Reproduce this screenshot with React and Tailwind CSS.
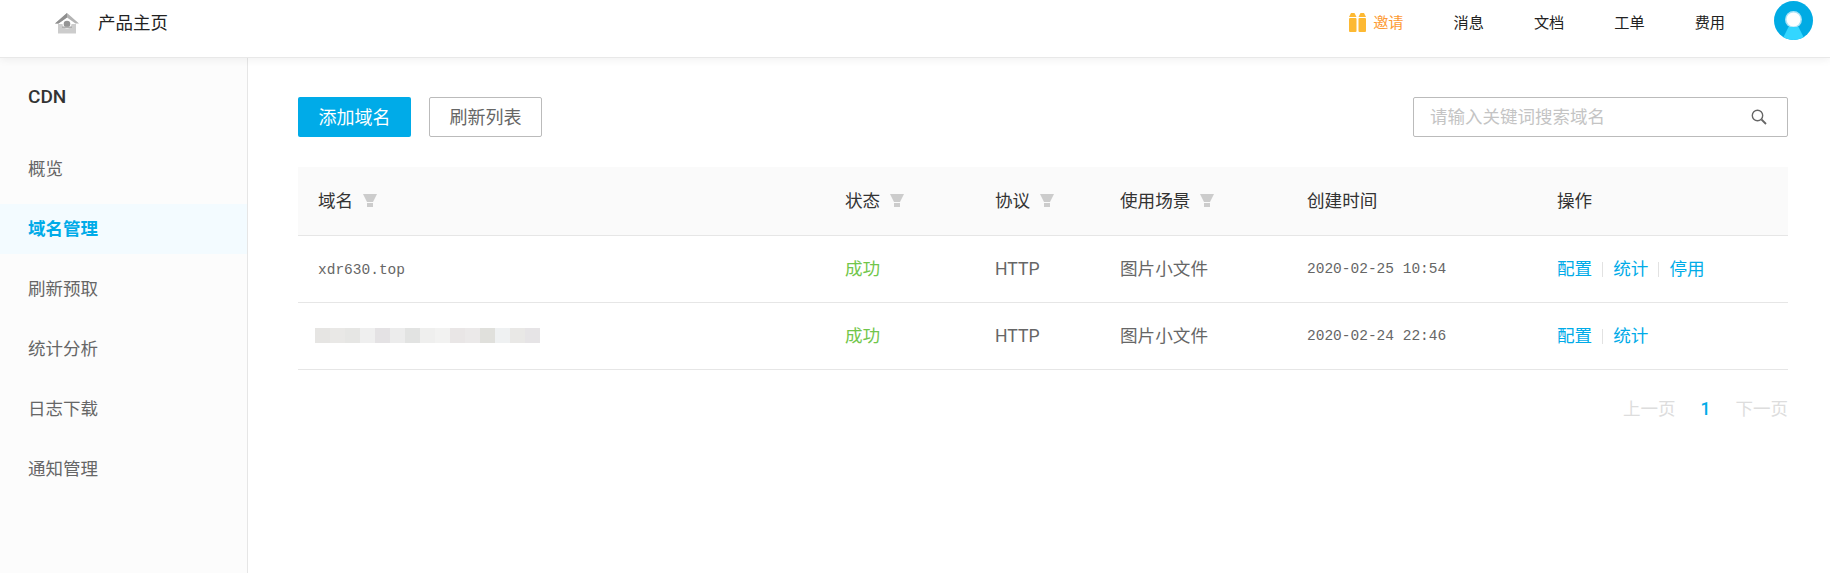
import React from "react";

const sideItems = ["概览", "域名管理", "刷新预取", "统计分析", "日志下载", "通知管理"];

const rows = [
	{ name: "xdr630.top", date: "2020-02-25 10:54", ops: ["配置", "统计", "停用"] },
	{ name: null, date: "2020-02-24 22:46", ops: ["配置", "统计"] },
];

const blurBlocks = [
	"bg-[#e6e5e3]", "bg-[#e9e8e6]", "bg-[#e6e6e4]", "bg-[#efefef]", "bg-[#e4e2e4]",
	"bg-[#ececec]", "bg-[#e2e3e2]", "bg-[#efefee]", "bg-[#f2f2f1]", "bg-[#e9e6e6]",
	"bg-[#ebe9e9]", "bg-[#e0e0dc]", "bg-[#eff1f2]", "bg-[#e9e8e6]", "bg-[#e6e4e6]",
];

function FilterIcon() {
	return (
		<svg width="14" height="13" viewBox="0 0 14 13" className="ml-[10px] shrink-0">
			<path d="M0 0h14l-4 8H4z" fill="#cccccc" />
			<rect x="4" y="9" width="6" height="4" fill="#cccccc" />
		</svg>
	);
}

function HomeLogo() {
	return (
		<svg width="24" height="21" viewBox="0 0 24 21" className="shrink-0">
			<path d="M3 11h18v9.500H3z" fill="#cccccc" />
			<path d="M12 0l12 10.500h-3.500L12 4.500 3.500 10.500H0z" fill="#b4b4b4" />
			<path d="M12 0L0 10.500h3.500L12 4.500z" fill="#8f8f8f" />
			<circle cx="12" cy="11" r="4.500" fill="#ffffff" />
			<circle cx="12" cy="11" r="3.300" fill="#949494" />
			<rect x="7" y="13.500" width="10" height="1.500" fill="#b0b0b0" />
		</svg>
	);
}

function GiftIcon() {
	return (
		<svg width="17" height="19" viewBox="0 0 17 19" className="shrink-0">
			<path d="M2 0h3.500l2 4H0z" fill="#fdb933" />
			<path d="M11.500 0H15l2 4H9.500z" fill="#fdb933" />
			<rect x="0" y="5" width="7.500" height="14" rx="1" fill="#fdb933" />
			<rect x="9.500" y="5" width="7.500" height="14" rx="1" fill="#fdb933" />
		</svg>
	);
}

function Avatar() {
	return (
		<svg width="40" height="40" viewBox="0 0 40 40" className="shrink-0 -ml-[1px] mb-[4px]">
			<clipPath id="avatar-clip">
				<circle cx="19.500" cy="19.500" r="19.500" />
			</clipPath>
			<circle cx="19.500" cy="19.500" r="19.500" fill="#00abe4" />
			<circle cx="19.500" cy="18.500" r="8.500" fill="#a9e3f7" />
			<circle cx="19.500" cy="18.500" r="7" fill="#ffffff" />
			<path d="M14.500 26h10l7 14H7.500z" fill="#33d6ff" clipPath="url(#avatar-clip)" />
		</svg>
	);
}

function SearchIcon() {
	return (
		<svg width="16" height="16" viewBox="0 0 16 16" fill="none" stroke="#666666" className="shrink-0">
			<circle cx="6.500" cy="6.500" r="5.200" strokeWidth="1.400" />
			<path d="M10.500 10.500L15 15" strokeWidth="1.800" />
		</svg>
	);
}

export default function App() {
	return (
		<div className="h-[573px] flex flex-col bg-white overflow-hidden font-['Roboto','Noto_Sans_CJK_SC',sans-serif]">
			{/* 顶部导航 */}
			<header className="relative z-10 h-[58px] shrink-0 flex items-center justify-between pl-[55px] pr-[16px] pb-[14px] pt-[3px] bg-white border-b border-[#e8e8e8] shadow-[0_2px_8px_rgba(0,0,0,0.06)]">
				<div className="flex items-center gap-[19px] text-[17.5px] text-[#222]">
					<HomeLogo />
					<span>产品主页</span>
				</div>
				<nav className="flex items-center gap-[50px] text-[15.2px] text-[#222]">
					<span className="flex items-center gap-[7px] text-[#fd9a33]">
						<GiftIcon />
						邀请
					</span>
					<span>消息</span>
					<span>文档</span>
					<span>工单</span>
					<span>费用</span>
					<Avatar />
				</nav>
			</header>

			<div className="flex flex-1 min-h-0">
				{/* 侧边栏 */}
				<aside className="w-[248px] shrink-0 bg-[#fcfcfc] border-r border-[#e6e6e6]">
					<h2 className="h-[76px] pl-[28px] pt-[2px] flex items-center text-[19px] font-medium text-[#333]">CDN</h2>
					<ul className="pt-[10px] flex flex-col gap-[10px] text-[17.5px] text-[#666]">
						{sideItems.map((item) => (
							<li
								key={item}
								className={
									item === "域名管理"
										? "h-[50px] pl-[28px] flex items-center bg-[#f3fbff] font-bold text-[#00abe8]"
										: "h-[50px] pl-[28px] flex items-center"
								}>
								{item}
							</li>
						))}
					</ul>
				</aside>

				{/* 主内容 */}
				<main className="flex-1 min-w-0 pl-[50px] pr-[42px] pt-[39px]">
					<div className="flex items-center justify-between">
						<div className="flex gap-[18px] text-[18px]">
							<button className="w-[113px] h-[40px] rounded-[2px] bg-[#00abe8] text-white">添加域名</button>
							<button className="w-[113px] h-[40px] rounded-[2px] border border-[#bbbbbb] text-[#666]">刷新列表</button>
						</div>
						<div className="w-[375px] h-[40px] flex items-center justify-between pl-[16px] pr-[20px] rounded-[2px] border border-[#bbbbbb]">
							<span className="text-[17.5px] text-[#c4c4c4]">请输入关键词搜索域名</span>
							<SearchIcon />
						</div>
					</div>

					<table className="mt-[30px] w-full table-fixed border-collapse text-[17.6px]">
						<thead>
							<tr className="h-[68px] bg-[#fafafa] border-b border-[#e6e6e6] text-[#333] text-left">
								<th className="w-[527px] pl-[20px] font-normal">
									<span className="flex items-center">域名<FilterIcon /></span>
								</th>
								<th className="w-[150px] pl-[20px] font-normal">
									<span className="flex items-center">状态<FilterIcon /></span>
								</th>
								<th className="w-[125px] pl-[20px] font-normal">
									<span className="flex items-center">协议<FilterIcon /></span>
								</th>
								<th className="w-[187px] pl-[20px] font-normal">
									<span className="flex items-center">使用场景<FilterIcon /></span>
								</th>
								<th className="w-[250px] pl-[20px] font-normal">创建时间</th>
								<th className="pl-[20px] font-normal">操作</th>
							</tr>
						</thead>
						<tbody className="text-[#666]">
							{rows.map((row) => (
								<tr key={row.date} className="h-[67px] border-b border-[#e6e6e6]">
									<td className="pl-[20px]">
										{row.name ? (
											<span className="font-['Liberation_Mono',monospace] text-[14.5px]">{row.name}</span>
										) : (
											<div className="flex -ml-[3px]">
												{blurBlocks.map((c, i) => (
													<div key={i} className={"w-[15px] h-[15px] " + c} />
												))}
											</div>
										)}
									</td>
									<td className="pl-[20px] pt-[2px] text-[#71c64b]">成功</td>
									<td className="pl-[20px] pt-[2px]">HTTP</td>
									<td className="pl-[20px] pt-[2px]">图片小文件</td>
									<td className="pl-[20px] pt-[2px] font-['Liberation_Mono',monospace] text-[14.5px]">{row.date}</td>
									<td className="pl-[20px] pt-[2px] text-[#00abe8]">
										<span className="flex items-center">
											{row.ops.map((op, i) => (
												<React.Fragment key={op}>
													{i > 0 && <i className="w-px h-[15px] mx-[10px] bg-[#e2e2e2]" />}
													{op}
												</React.Fragment>
											))}
										</span>
									</td>
								</tr>
							))}
						</tbody>
					</table>

					{/* 分页 */}
					<div className="mt-[26px] flex justify-end items-center text-[17.5px] text-[#dddddd]">
						<span>上一页</span>
						<span className="mx-[25px] w-[10px] text-center font-medium text-[#00abe8]">1</span>
						<span>下一页</span>
					</div>
				</main>
			</div>
		</div>
	);
}
